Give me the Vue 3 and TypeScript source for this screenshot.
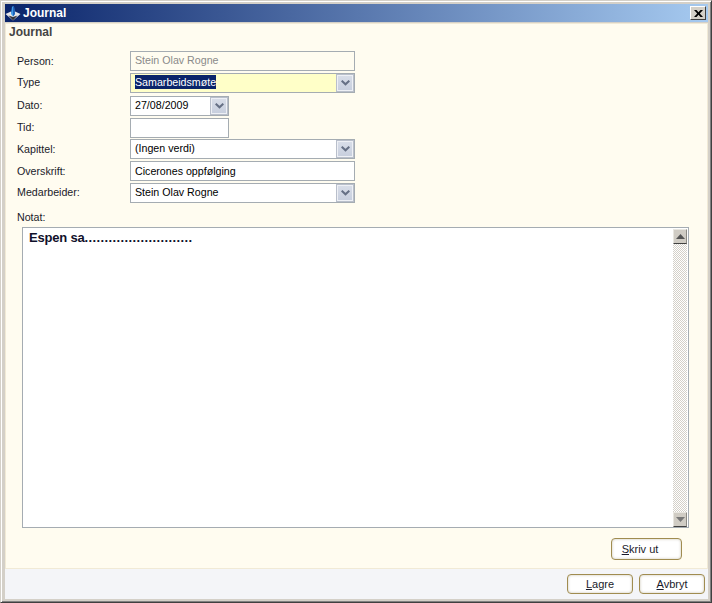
<script setup lang="ts">
interface Row {
  label: string
  value: string
  kind: 'text' | 'select'
  short?: boolean
  readonly?: boolean
  active?: boolean
  low?: boolean
  lowValue?: boolean
  gap: number
}

const rows: Row[] = [
  { label: 'Person:', value: 'Stein Olav Rogne', kind: 'text', readonly: true, low: true, gap: 0 },
  { label: 'Type', value: 'Samarbeidsmøte', kind: 'select', active: true, gap: 2 },
  { label: 'Dato:', value: '27/08/2009', kind: 'select', short: true, gap: 3 },
  { label: 'Tid:', value: '', kind: 'text', short: true, gap: 2 },
  { label: 'Kapittel:', value: '(Ingen verdi)', kind: 'select', low: true, gap: 1 },
  { label: 'Overskrift:', value: 'Cicerones oppfølging', kind: 'text', low: true, lowValue: true, gap: 2 },
  { label: 'Medarbeider:', value: 'Stein Olav Rogne', kind: 'select', gap: 2 },
]
</script>

<template>
  <div class="window">
    <div class="titlebar">
      <svg class="app-icon" width="16" height="16" viewBox="0 0 16 16">
        <path d="M0.5 9 L6 6.5 L8 10 L10 6.5 L15.5 9 L8 15.5 Z" fill="#e6e6ea" />
        <path d="M3.5 10.5 L8 12 L12.5 10.5 L8 15.5 Z" fill="#34343c" />
        <path d="M7 1.5 L9 1.5 L10 9 L8 11.5 L6 9 Z" fill="#3f9ae8" />
        <path d="M8 1.5 L9 1.5 L10 9 L8 11.5 Z" fill="#1f62b8" />
      </svg>
      <span class="title-text">Journal</span>
      <button class="close-btn">
        <svg width="9" height="7" viewBox="0 0 9 7">
          <path d="M0 0 L2.5 0 L4.5 2.2 L6.5 0 L9 0 L5.8 3.5 L9 7 L6.5 7 L4.5 4.8 L2.5 7 L0 7 L3.2 3.5 Z" fill="#000" />
        </svg>
      </button>
    </div>

    <div class="panel">
      <h1 class="heading">Journal</h1>

      <div class="form">
        <div
          v-for="row in rows"
          :key="row.label"
          class="row"
          :class="`gap-${row.gap}`"
        >
          <label class="label" :class="{ low: row.low }">{{ row.label }}</label>
          <div
            class="field"
            :class="{ short: row.short, readonly: row.readonly, active: row.active }"
          >
            <span class="value" :class="{ selected: row.active, low: row.lowValue }">{{ row.value }}</span>
            <span v-if="row.kind === 'select'" class="drop">
              <svg width="9" height="6" viewBox="0 0 9 6">
                <path d="M0.7 0.7 L4.5 4.3 L8.3 0.7" fill="none" stroke="#667085" stroke-width="2" />
              </svg>
            </span>
          </div>
        </div>
      </div>

      <div class="notat-label">Notat:</div>
      <div class="notat">
        <div class="notat-text">Espen sa<span class="dots">...........................</span></div>
        <div class="scrollbar">
          <div class="sb-btn">
            <svg width="9" height="5" viewBox="0 0 9 5"><path d="M4.5 0 L9 5 L0 5 Z" fill="#555" /></svg>
          </div>
          <div class="sb-track" />
          <div class="sb-btn">
            <svg width="9" height="5" viewBox="0 0 9 5"><path d="M0 0 L9 0 L4.5 5 Z" fill="#777" /></svg>
          </div>
        </div>
      </div>

      <div class="print-row">
        <button class="btn print"><u>S</u>kriv ut</button>
      </div>
    </div>

    <div class="footer">
      <button class="btn"><u>L</u>agre</button>
      <button class="btn"><u>A</u>vbryt</button>
    </div>
  </div>
</template>

<style>
html,
body {
  margin: 0;
  background: #d4d0c8;
}
</style>

<style scoped>
.window {
  box-sizing: border-box;
  width: 712px;
  height: 603px;
  display: flex;
  flex-direction: column;
  padding: 3px 3px 3px 4px;
  background: #d4d0c8;
  border-left: 1px solid #d4d0c8;
  border-top: 1px solid #d4d0c8;
  border-right: 1px solid #404040;
  border-bottom: 1px solid #404040;
  box-shadow: inset 1px 1px 0 #fff, inset -1px -1px 0 #808080;
  font-family: "Liberation Sans", Arial, sans-serif;
  font-size: 10.67px;
  color: #1a1a2a;
}

.titlebar {
  flex: none;
  height: 18px;
  display: flex;
  align-items: center;
  padding: 0 2px 0 0;
  background: linear-gradient(90deg, #0a246a 0%, #a6caf0 100%);
}

.app-icon {
  flex: none;
}

.title-text {
  margin: -1px 0 0 2px;
  color: #fff;
  font-size: 12px;
  font-weight: bold;
}

.close-btn {
  margin-left: auto;
  box-sizing: border-box;
  width: 16px;
  height: 14px;
  padding: 0;
  display: flex;
  align-items: center;
  justify-content: center;
  background: #d4d0c8;
  border: 1px solid;
  border-color: #fff #404040 #404040 #fff;
}

.panel {
  flex: none;
  box-sizing: border-box;
  height: 546px;
  margin-top: 1px;
  padding: 0 0 0 3px;
  display: flex;
  flex-direction: column;
  background: #fffcf0;
  border: 1px solid #f1ead6;
}

.heading {
  margin: 1px 0 0;
  height: 14px;
  line-height: 14px;
  font-size: 12px;
  font-weight: bold;
  color: #444;
}

.form {
  margin-top: 12px;
  display: flex;
  flex-direction: column;
}

.row {
  display: flex;
  height: 20px;
  align-items: center;
}

.gap-1 { margin-top: 1px; }
.gap-2 { margin-top: 2px; }
.gap-3 { margin-top: 3px; }

.label {
  box-sizing: border-box;
  width: 121px;
  padding: 0 0 2px 8px;
}

.label.low {
  padding-bottom: 0;
}

.field {
  box-sizing: border-box;
  width: 225px;
  height: 20px;
  display: flex;
  align-items: center;
  padding: 0 1px 0 4px;
  background: #fff;
  border: 1px solid #a5acb2;
  color: #000;
}

.field.short {
  width: 99px;
}

.field.readonly {
  background: #fffcf0;
  color: #8a8a8a;
}

.field.active {
  background: #ffffc8;
}

.value {
  line-height: 14px;
  margin-top: -2px;
}

.value.low {
  margin-top: 0;
}

.value.selected {
  background: #0a246a;
  color: #fff;
}

.drop {
  box-sizing: border-box;
  margin-left: auto;
  width: 16px;
  height: 16px;
  display: flex;
  align-items: center;
  justify-content: center;
  background: linear-gradient(#d8dde8, #c8cfde);
  border: 1px solid #eef0f5;
  outline: 1px solid #b9bfcb;
  outline-offset: 0;
}

.notat-label {
  margin: 7px 0 0 8px;
  height: 14px;
  line-height: 14px;
}

.notat {
  box-sizing: border-box;
  width: 667px;
  height: 301px;
  margin: 3px 0 0 13px;
  display: flex;
  background: #fff;
  border: 1px solid #a5acb2;
}

.notat-text {
  flex: 1;
  padding: 2px 0 0 6px;
  font-size: 13px;
  font-weight: bold;
  line-height: 16px;
  letter-spacing: -0.2px;
  color: #10102a;
}

.dots {
  letter-spacing: 0.39px;
}

.scrollbar {
  flex: none;
  width: 14px;
  margin: 1px 1px 0 0;
  height: 298px;
  display: flex;
  flex-direction: column;
}

.sb-track {
  flex: 1;
  background: repeating-conic-gradient(#d4d0c8 0 25%, #fff 0 50%) 0 0 / 2px 2px;
}

.sb-btn {
  box-sizing: border-box;
  flex: none;
  height: 15px;
  display: flex;
  align-items: center;
  justify-content: center;
  background: #d0ccc4;
  border: 1px solid;
  border-color: #e8e6e0 #8c8a84 #404040 #e8e6e0;
}

.print-row {
  margin: 10px 0 0 602px;
}

.btn {
  box-sizing: border-box;
  width: 66px;
  height: 20px;
  padding: 0 0 1px;
  font: inherit;
  font-size: 11px;
  color: #1a1a2a;
  background: #fff;
  border: 1px solid #a08c50;
  border-radius: 4px;
  box-shadow: inset 0 0 3px #c8c4b4;
}

.btn.print {
  width: 71px;
  height: 22px;
  padding-right: 13px;
}

.footer {
  flex: 1;
  display: flex;
  justify-content: flex-end;
  gap: 6px;
  padding: 5px 3px 0 0;
  background: #f4f5f8;
}
</style>
